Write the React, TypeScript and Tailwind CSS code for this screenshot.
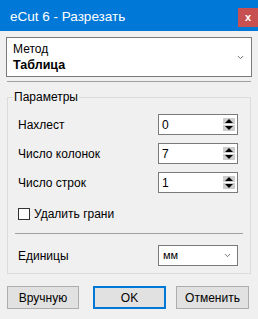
import { ChevronDown } from 'lucide-react';

const font = { fontFamily: '"Liberation Sans", Arial, sans-serif' };

function Spin({ value }: { value: string }) {
  return (
    <div className="flex items-center w-[80px] h-[21px] bg-white border border-[#7a7a7a] pl-[3px] pr-[2px]">
      <span className="flex-1 text-[12px] text-black">{value}</span>
      <div className="flex flex-col gap-[1px]">
        <div className="w-[12px] h-[6px] bg-[#cdcdcd] flex items-center justify-center">
          <div className="w-0 h-0 border-l-[4px] border-r-[4px] border-b-[4px] border-l-transparent border-r-transparent border-b-black" />
        </div>
        <div className="w-[12px] h-[6px] bg-[#cdcdcd] flex items-center justify-center">
          <div className="w-0 h-0 border-l-[4px] border-r-[4px] border-t-[4px] border-l-transparent border-r-transparent border-t-black" />
        </div>
      </div>
    </div>
  );
}

function Row({ label, value }: { label: string; value: string }) {
  return (
    <div className="flex items-center h-[21px]">
      <span className="flex-1 text-[12px] text-black">{label}</span>
      <Spin value={value} />
    </div>
  );
}

export default function App() {
  return (
    <div className="w-[258px] h-[319px] bg-[#f0f0f0] overflow-hidden" style={font}>
      {/* Title bar */}
      <div className="h-[31px] bg-[#0078d7] flex items-start justify-between">
        <span className="text-white text-[13.5px] pl-[10px] pt-[7px]">eCut 6 - Разрезать</span>
        <div className="mt-[8px] w-[20px] h-[19px] bg-[#c75050] flex items-center justify-center text-white text-[11px] font-bold">x</div>
      </div>

      <div className="px-[6px]">
        {/* Method dropdown */}
        <div className="mt-[6px] h-[40px] bg-white border border-[#7a7a7a] flex items-center pl-[6px] pr-[6px]">
          <div className="flex-1 flex flex-col leading-[16px]">
            <span className="text-[12px] text-black">Метод</span>
            <span className="text-[12.5px] font-bold text-black">Таблица</span>
          </div>
          <ChevronDown className="w-[9px] h-[9px] text-[#444]" strokeWidth={2} />
        </div>

        <div className="mt-[4px] mx-[1px] border-t border-[#a0a0a0]" />

        {/* Parameters group */}
        <div className="relative mt-[15px] mx-[1px] h-[177px] border border-[#dcdcdc] pt-[16px] pl-[10px] pr-[12px]">
          <span className="absolute left-[5px] top-[-8px] bg-[#f0f0f0] px-[1px] text-[12px] text-black leading-[14px]">Параметры</span>
          <div className="flex flex-col gap-[8px]">
            <Row label="Нахлест" value="0" />
            <Row label="Число колонок" value="7" />
            <Row label="Число строк" value="1" />
          </div>
          <label className="mt-[14px] flex items-center gap-[4px] h-[13px]">
            <span className="w-[12px] h-[12px] bg-white border border-[#333]" />
            <span className="text-[12px] text-black">Удалить грани</span>
          </label>
          <div className="mt-[13px] mr-[-5px] ml-[-3px] border-t border-[#a0a0a0]" />
          <div className="mt-[11px] flex items-center h-[21px]">
            <span className="flex-1 text-[12px] text-black">Единицы</span>
            <div className="w-[80px] h-[21px] bg-white border border-[#7a7a7a] flex items-center pl-[4px] pr-[5px]">
              <span className="flex-1 text-[11px] text-black">мм</span>
              <ChevronDown className="w-[9px] h-[9px] text-[#444]" strokeWidth={2} />
            </div>
          </div>
        </div>

        {/* Buttons */}
        <div className="mt-[12px] flex ml-[1px]">
          <button className="w-[72px] h-[23px] bg-[#e1e1e1] border border-[#adadad] text-[12px] text-black">Вручную</button>
          <button className="ml-[14px] w-[73px] h-[23px] bg-[#e1e1e1] border-2 border-[#0078d7] text-[12px] text-black">OK</button>
          <button className="ml-[10px] w-[73px] h-[23px] bg-[#e1e1e1] border border-[#adadad] text-[12px] text-black">Отменить</button>
        </div>
      </div>
    </div>
  );
}
